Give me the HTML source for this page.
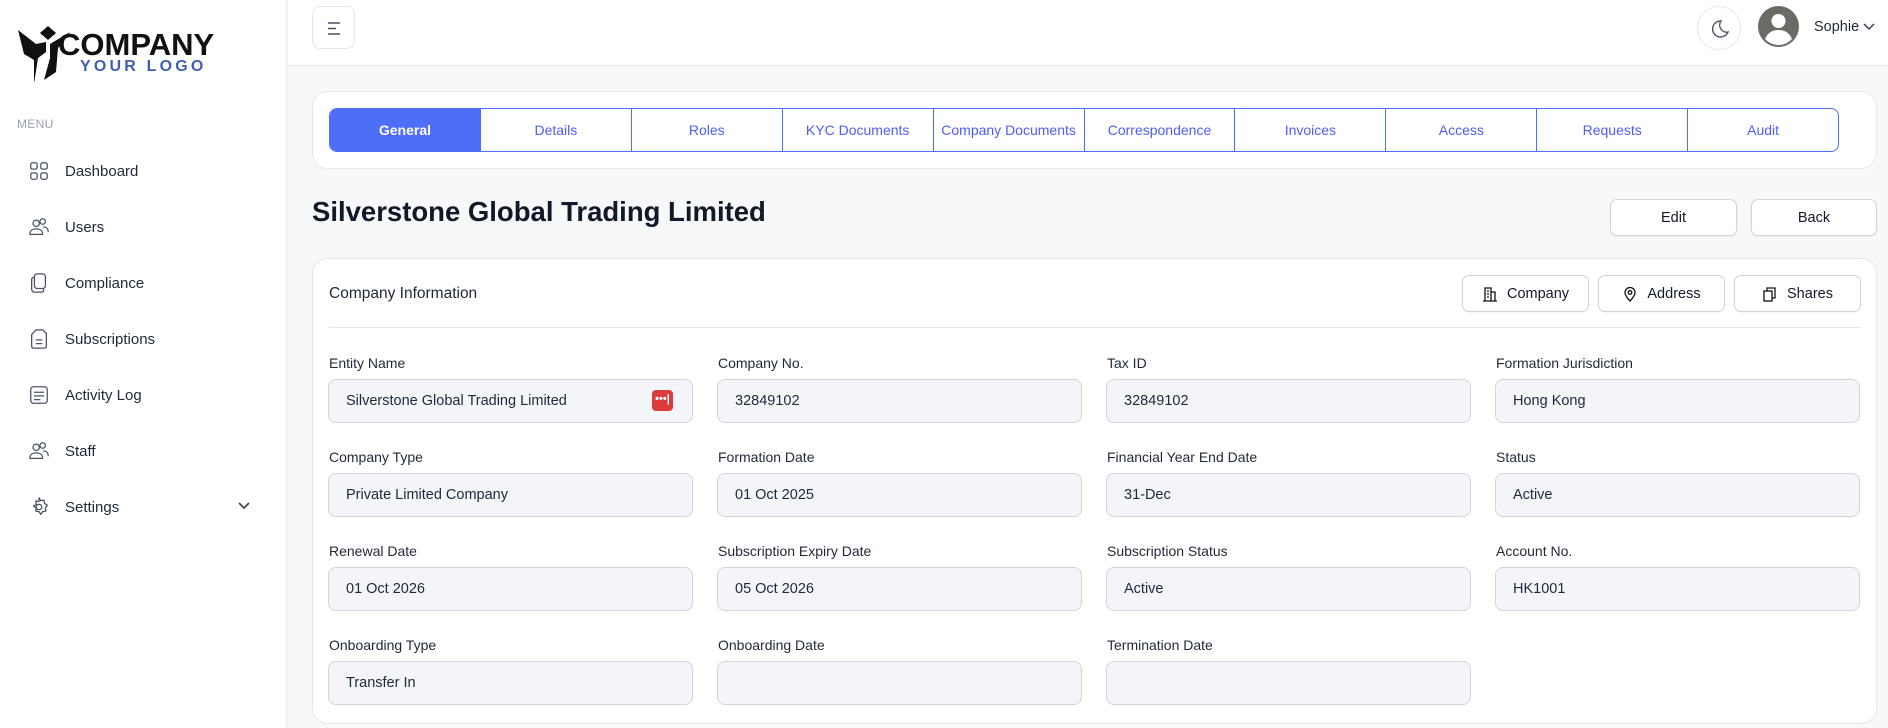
<!DOCTYPE html>
<html><head><meta charset="utf-8"><style>
*{box-sizing:border-box;margin:0;padding:0}
body{width:1888px;height:728px;overflow:hidden;font-family:"Liberation Sans","DejaVu Sans",sans-serif;background:#f7f8fa;color:#1f2937;position:relative}
.abs{position:absolute}
.side{left:0;top:0;width:287px;height:728px;background:#fff;border-right:1px solid #e5e7eb}
.menu{left:17px;top:117px;font-size:12px;color:#9ca3af;letter-spacing:.3px}
.item{left:28px;height:30px;display:flex;align-items:center;font-size:15px;color:#1f2937}
.item svg{width:22px;height:22px;margin-right:15px;fill:none;stroke:#4b5563;stroke-width:1.4;stroke-linecap:round;stroke-linejoin:round}
.head{left:288px;top:0;width:1600px;height:66px;background:#fff;border-bottom:1px solid #e5e7eb}
.card{background:#fff;border:1px solid #e5e7eb;border-radius:16px}
.tabs{left:329px;top:108px;width:1510px;height:44px;border:1.5px solid #4f6ef7;border-radius:8px;display:flex;overflow:hidden}
.tabs div{flex:1;display:flex;align-items:center;justify-content:center;font-size:14px;color:#4f5ef2;border-left:1.5px solid #4f6ef7}
.tabs div:first-child{border-left:none;background:#4f6ef7;color:#fff;font-weight:bold}
.btn{background:#fff;border:1px solid #d1d5db;border-radius:7px;display:flex;align-items:center;justify-content:center;font-size:14.5px;color:#111827;box-shadow:0 1px 2px rgba(0,0,0,.05)}
.btn svg{width:16px;height:16px;margin-right:9px;fill:none;stroke:#111;stroke-width:1.3}
.lbl{font-size:14px;color:#1f2937}
.inp{width:365px;height:44px;background:#f3f5f8;border:1px solid #d1d5db;border-radius:8px;font-size:14.5px;padding-left:17px;display:flex;align-items:center;color:#1f2937}
</style></head><body>
<div class="abs side">
 <svg class="abs" style="left:16px;top:20px" width="60" height="62" viewBox="0 0 60 62"><polygon points="32,6 40,13 32,20 24,13" fill="#111"/><polygon points="2,10 20,24 30,22 30,32 22,38 18,64 18,40 8,34" fill="#111"/><polygon points="54,12 34,24 34,38 28,60 40,52 42,28" fill="#111"/></svg>
 <div class="abs" style="left:58px;top:27px;font-size:31px;font-weight:bold;color:#111;letter-spacing:0">COMPANY</div>
 <div class="abs" style="left:80px;top:58px;font-size:16px;font-weight:bold;color:#3f5fb5;letter-spacing:3.2px">YOUR LOGO</div>
 <div class="abs menu">MENU</div>
 <div class="abs item" style="top:156px"><svg viewBox="0 0 24 24"><rect x="3" y="3" width="7" height="7" rx="2"/><rect x="14" y="3" width="7" height="7" rx="2"/><rect x="3" y="14" width="7" height="7" rx="2"/><rect x="14" y="14" width="7" height="7" rx="2"/></svg>Dashboard</div>
 <div class="abs item" style="top:212px"><svg viewBox="0 0 24 24"><circle cx="9" cy="8" r="3.5"/><path d="M2 20c0-4 3-6 7-6s7 2 7 6z"/><circle cx="16" cy="6" r="3"/><path d="M17 12c3 0 5 2 5 5"/></svg>Users</div>
 <div class="abs item" style="top:268px"><svg viewBox="0 0 24 24"><rect x="7" y="2" width="12" height="16" rx="3"/><path d="M7 6H6a2 2 0 0 0-2 2v11a3 3 0 0 0 3 3h8a2 2 0 0 0 2-2v-1"/></svg>Compliance</div>
 <div class="abs item" style="top:324px"><svg viewBox="0 0 24 24"><path d="M9 2h7l4 4v14a2 2 0 0 1-2 2H6a2 2 0 0 1-2-2V7z"/><path d="M9 13h6M9 17h6"/></svg>Subscriptions</div>
 <div class="abs item" style="top:380px"><svg viewBox="0 0 24 24"><rect x="3" y="3" width="18" height="18" rx="3"/><path d="M7 9h10M7 13h10M7 17h6"/></svg>Activity Log</div>
 <div class="abs item" style="top:436px"><svg viewBox="0 0 24 24"><circle cx="9" cy="8" r="3.5"/><path d="M2 20c0-4 3-6 7-6s7 2 7 6z"/><circle cx="16" cy="6" r="3"/><path d="M17 12c3 0 5 2 5 5"/></svg>Staff</div>
 <div class="abs item" style="top:492px"><svg viewBox="0 0 24 24"><circle cx="12" cy="12" r="3"/><path d="M12 2l2 3 3.5-.5.5 3.5 3 2-2 3 .5 3.5-3.5.5-2 3-2-3-3.5-.5.5-3.5-3-2 3-2-.5-3.5 3.5.5z"/></svg>Settings</div>
 <svg class="abs" style="left:237px;top:501px" width="14" height="10" viewBox="0 0 14 10"><path d="M2 2l5 5 5-5" fill="none" stroke="#374151" stroke-width="1.6"/></svg>
</div>
<div class="abs head"></div>
<div class="abs" style="left:312px;top:6px;width:43px;height:43px;border:1px solid #e5e7eb;border-radius:8px;background:#fff"><svg width="43" height="43" viewBox="0 0 43 43"><path d="M15 16h12M15 21.5h8M15 27h12" stroke="#4b5563" stroke-width="1.6"/></svg></div>
<div class="abs" style="left:1697px;top:6px;width:44px;height:44px;border:1px solid #e5e7eb;border-radius:50%;background:#fff"><svg width="44" height="44" viewBox="0 0 44 44"><path d="M23 14a8 8 0 1 0 7 11a7 7 0 0 1-7-11z" fill="none" stroke="#4b5563" stroke-width="1.4"/></svg></div>
<svg class="abs" style="left:1758px;top:6px" width="41" height="41" viewBox="0 0 41 41"><circle cx="20.5" cy="20.5" r="20.5" fill="#6b6b66"/><circle cx="20.5" cy="15" r="7" fill="#fff"/><path d="M7 33c3-7 8-9 13.5-9s10.5 2 13.5 9a18 18 0 0 1-27 0z" fill="#fff"/></svg>
<div class="abs" style="left:1814px;top:19px;font-size:14.5px;color:#1f2937">Sophie</div>
<svg class="abs" style="left:1863px;top:23px" width="12" height="8" viewBox="0 0 12 8"><path d="M1 1l5 5 5-5" fill="none" stroke="#374151" stroke-width="1.5"/></svg>

<div class="abs card" style="left:312px;top:91px;width:1565px;height:78px"></div>
<div class="abs tabs"><div>General</div><div>Details</div><div>Roles</div><div>KYC Documents</div><div>Company Documents</div><div>Correspondence</div><div>Invoices</div><div>Access</div><div>Requests</div><div>Audit</div></div>

<div class="abs" style="left:312px;top:196px;font-size:27.5px;font-weight:bold;color:#111827">Silverstone Global Trading Limited</div>
<div class="abs btn" style="left:1610px;top:199px;width:127px;height:37px">Edit</div>
<div class="abs btn" style="left:1751px;top:199px;width:126px;height:37px">Back</div>

<div class="abs card" style="left:312px;top:258px;width:1565px;height:466px"></div>
<div class="abs" style="left:329px;top:285px;font-size:15.5px;color:#1f2937">Company Information</div>
<div class="abs btn" style="left:1462px;top:275px;width:127px;height:37px"><svg viewBox="0 0 16 16"><path d="M3 15V2h6v13M9 6h4v9M1 15h14M5 5h2M5 8h2M5 11h2"/></svg>Company</div>
<div class="abs btn" style="left:1598px;top:275px;width:127px;height:37px"><svg viewBox="0 0 16 16"><path d="M8 15s5-5 5-8.5A5 5 0 0 0 3 6.5C3 10 8 15 8 15z"/><circle cx="8" cy="6.5" r="1.8"/></svg>Address</div>
<div class="abs btn" style="left:1734px;top:275px;width:127px;height:37px"><svg viewBox="0 0 16 16"><rect x="2" y="5" width="8" height="10"/><path d="M5 5V2h8v10h-3"/></svg>Shares</div>
<div class="abs" style="left:329px;top:327px;width:1532px;height:1px;background:#e5e7eb"></div>

<div class="abs lbl" style="left:329px;top:355px">Entity Name</div>
<div class="abs inp" style="left:328px;top:379px">Silverstone Global Trading Limited<div class="abs" style="left:323px;top:10px;width:21px;height:21px;background:#dc3b3b;border-radius:4px;color:#fff;font-size:11px;line-height:19px;text-align:center;font-weight:bold">•••|</div></div>
<div class="abs lbl" style="left:718px;top:355px">Company No.</div>
<div class="abs inp" style="left:717px;top:379px">32849102</div>
<div class="abs lbl" style="left:1107px;top:355px">Tax ID</div>
<div class="abs inp" style="left:1106px;top:379px">32849102</div>
<div class="abs lbl" style="left:1496px;top:355px">Formation Jurisdiction</div>
<div class="abs inp" style="left:1495px;top:379px">Hong Kong</div>

<div class="abs lbl" style="left:329px;top:449px">Company Type</div>
<div class="abs inp" style="left:328px;top:473px">Private Limited Company</div>
<div class="abs lbl" style="left:718px;top:449px">Formation Date</div>
<div class="abs inp" style="left:717px;top:473px">01 Oct 2025</div>
<div class="abs lbl" style="left:1107px;top:449px">Financial Year End Date</div>
<div class="abs inp" style="left:1106px;top:473px">31-Dec</div>
<div class="abs lbl" style="left:1496px;top:449px">Status</div>
<div class="abs inp" style="left:1495px;top:473px">Active</div>

<div class="abs lbl" style="left:329px;top:543px">Renewal Date</div>
<div class="abs inp" style="left:328px;top:567px">01 Oct 2026</div>
<div class="abs lbl" style="left:718px;top:543px">Subscription Expiry Date</div>
<div class="abs inp" style="left:717px;top:567px">05 Oct 2026</div>
<div class="abs lbl" style="left:1107px;top:543px">Subscription Status</div>
<div class="abs inp" style="left:1106px;top:567px">Active</div>
<div class="abs lbl" style="left:1496px;top:543px">Account No.</div>
<div class="abs inp" style="left:1495px;top:567px">HK1001</div>

<div class="abs lbl" style="left:329px;top:637px">Onboarding Type</div>
<div class="abs inp" style="left:328px;top:661px">Transfer In</div>
<div class="abs lbl" style="left:718px;top:637px">Onboarding Date</div>
<div class="abs inp" style="left:717px;top:661px"></div>
<div class="abs lbl" style="left:1107px;top:637px">Termination Date</div>
<div class="abs inp" style="left:1106px;top:661px"></div>
</body></html>
